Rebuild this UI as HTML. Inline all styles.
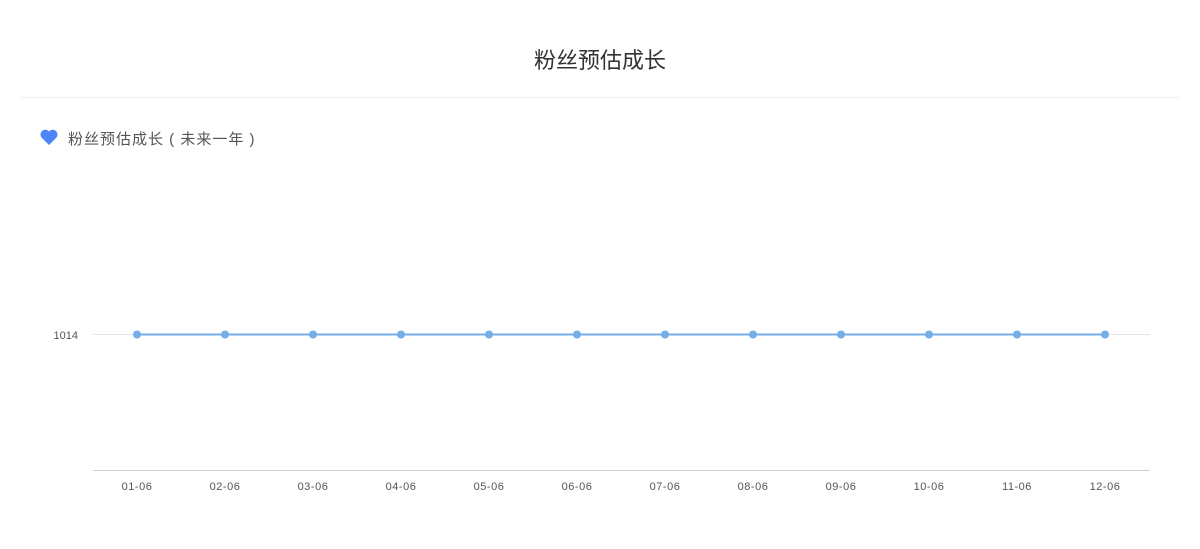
<!DOCTYPE html>
<html><head><meta charset="utf-8"><style>
body{margin:0;width:1200px;height:549px;background:#fff;font-family:"Liberation Sans","Noto Sans CJK SC",sans-serif;position:relative;overflow:hidden}
.t{position:absolute;left:0;width:1200px;top:46px;text-align:center;font-size:22px;color:#333;line-height:30px}
.sep{position:absolute;left:20px;width:1160px;top:97px;height:1px;background:#f0f0f6}
.sub{position:absolute;left:68px;top:130px;font-size:15px;color:#555;line-height:20px;white-space:pre;letter-spacing:1px}
</style></head><body>
<div class="t">粉丝预估成长</div>
<div class="sep"></div>
<svg style="position:absolute;left:40px;top:129px" width="18" height="17" viewBox="0 0 18 17"><path d="M9 16 L1.5 8.5 A4.3 4.3 0 0 1 9 2.5 A4.3 4.3 0 0 1 16.5 8.5 Z" fill="#4d84f7"/></svg>
<div class="sub">粉丝预估成长 ( 未来一年 )</div>
<svg style="position:absolute;left:0;top:0" width="1200" height="549">
<line x1="93" y1="334.5" x2="1150" y2="334.5" stroke="#e6e6e6"/>
<line x1="93" y1="470.5" x2="1150" y2="470.5" stroke="#ccd0d8"/>
<text x="78" y="339" text-anchor="end" font-size="11" fill="#555" font-family="Liberation Sans, sans-serif">1014</text>
<line x1="137" y1="334.5" x2="1105" y2="334.5" stroke="#74aee8" stroke-width="2"/>
<g fill="#74aee8">
<circle cx="137" cy="334.5" r="4"/><circle cx="225" cy="334.5" r="4"/><circle cx="313" cy="334.5" r="4"/><circle cx="401" cy="334.5" r="4"/><circle cx="489" cy="334.5" r="4"/><circle cx="577" cy="334.5" r="4"/><circle cx="665" cy="334.5" r="4"/><circle cx="753" cy="334.5" r="4"/><circle cx="841" cy="334.5" r="4"/><circle cx="929" cy="334.5" r="4"/><circle cx="1017" cy="334.5" r="4"/><circle cx="1105" cy="334.5" r="4"/>
</g>
<g font-size="11" fill="#555" text-anchor="middle" font-family="Liberation Sans, sans-serif" letter-spacing="0.5">
<text x="137" y="490">01-06</text><text x="225" y="490">02-06</text><text x="313" y="490">03-06</text><text x="401" y="490">04-06</text><text x="489" y="490">05-06</text><text x="577" y="490">06-06</text><text x="665" y="490">07-06</text><text x="753" y="490">08-06</text><text x="841" y="490">09-06</text><text x="929" y="490">10-06</text><text x="1017" y="490">11-06</text><text x="1105" y="490">12-06</text>
</g>
</svg>
</body></html>
